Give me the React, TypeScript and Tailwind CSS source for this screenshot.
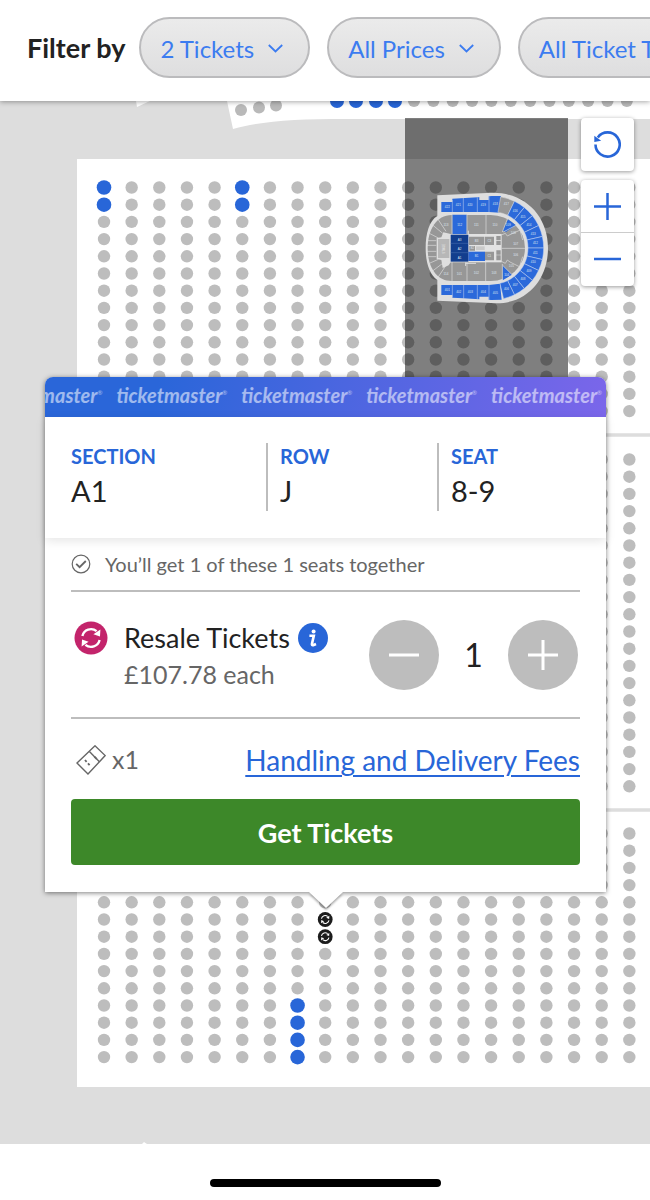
import { useState } from "react";

const COLS = Array.from({ length: 20 }, (_, i) => 104 + i * 27.65);

const BLOCKS = [
  { top: 187.5, rows: 14 },
  { top: 459.5, rows: 20 },
  { top: 833.5, rows: 14 },
];

const AVAILABLE = new Set(["0-0-0", "0-1-0", "0-0-5", "0-1-5", "2-10-7", "2-11-7", "2-12-7", "2-13-7"]);
const SELECTED = new Set(["2-5-8", "2-6-8"]);

const FILTERS = ["2 Tickets", "All Prices", "All Ticket Types"];

const ResaleArrows = () => (
  <g>
    <path d="M-8.6 -2 A8.8 8.8 0 0 1 5.6 -6.8" fill="none" stroke="white" strokeWidth="2.4" />
    <path d="M8.6 2 A8.8 8.8 0 0 1 -5.6 6.8" fill="none" stroke="white" strokeWidth="2.4" />
    <path d="M9.4 -8.6 L9 -1.4 L2.4 -3.8 Z" fill="white" />
    <path d="M-9.4 8.6 L-9 1.4 L-2.4 3.8 Z" fill="white" />
  </g>
);

const SeatMap = () => (
  <svg
    viewBox="0 101 650 1043"
    preserveAspectRatio="xMinYMin slice"
    className="block h-[1043px] w-full bg-[#dddddd]"
    aria-label="Seat map"
  >
    <path d="M136 101 L150 101 L137 107 Z" fill="white" />
    <path d="M227 101 L233 129 C262 121 295 119 345 119 L650 119 V101 Z" fill="white" />
    <g fill="#b9b9b9">
      <circle cx="241" cy="110" r="6" />
      <circle cx="259" cy="107.5" r="6" />
      <circle cx="276" cy="105.5" r="6" />
      {Array.from({ length: 12 }, (_, i) => (
        <circle key={i} cx={414 + i * 19.35} cy="101" r="6" />
      ))}
    </g>
    <g fill="#2866d8">
      {[337, 356, 376, 395].map((x) => (
        <circle key={x} cx={x} cy="101" r="7" />
      ))}
    </g>
    <rect x="77" y="159" width="573" height="928" fill="white" />
    <path d="M77 435 H650 M77 810 H650" stroke="#dddddd" strokeWidth="3.5" />
    <path d="M142 1144 L144 1142 L147 1144 Z" fill="white" />
    {BLOCKS.map((block, b) =>
      Array.from({ length: block.rows }, (_, r) =>
        COLS.map((x, c) => {
          const id = `${b}-${r}-${c}`;
          const y = block.top + r * 17.2;
          if (SELECTED.has(id)) {
            return (
              <g key={id} transform={`translate(${x} ${y})`}>
                <circle r="7.4" fill="#1c1c1c" />
                <g transform="scale(0.44)">
                  <ResaleArrows />
                </g>
              </g>
            );
          }
          const free = AVAILABLE.has(id);
          return <circle key={id} cx={x} cy={y} r={free ? 7.3 : 6.2} fill={free ? "#2866d8" : "#bdbdbd"} />;
        })
      )
    )}
  </svg>
);

const BLUE = "#2b69da";
const GRAY = "#979797";

const polar = (deg: number, r: number) => {
  const a = (deg * Math.PI) / 180;
  return `${(215 + Math.sin(a) * r).toFixed(1)} ${(204 - Math.cos(a) * r).toFixed(1)}`;
};

const wedge = (from: number, to: number) =>
  `M${polar(from, 156)} A156 156 0 0 1 ${polar(to, 156)} L${polar(to, 109)} A109 109 0 0 0 ${polar(from, 109)} Z`;

const upperRing = [416, 415, 414, 413, 412, 411, 410, 409, 408, 407, 406].map((name, i) => ({
  name,
  from: 26 + i * 12.8,
  to: 38.8 + i * 12.8,
}));

const MiniLabel = ({ x, y, children }: { x: number; y: number; children: React.ReactNode }) => (
  <text x={x} y={y + 3} textAnchor="middle" fontSize="9" fill="#dfe5f0">
    {children}
  </text>
);

const MiniMap = () => (
  <div className="absolute right-[82px] top-[17px] h-[262px] w-[163px] bg-black/50">
    <svg viewBox="-45 -186 489 786" className="block size-full font-['Liberation_Sans',sans-serif]" aria-label="Venue overview">
      <path d="M52 46 L200 39 C310 30 384 105 384 204 C384 300 318 378 214 369 L52 362 V300 C28 284 17 246 17 205 C17 160 28 122 52 108 Z" fill="#dedede" />
      {/* lower bowl */}
      <path d="M95 105 H212 A103 99 0 0 1 212 303 H95 C50 303 23 262 23 205 C23 148 50 105 95 105 Z" fill={GRAY} />
      <path d="M97 104 H140 V163 H97 Z M248 152 L264 118 L288 136 L258 156 Z M248 256 L276 284 L248 301 Z" fill={BLUE} />
      <g stroke="#dedede" strokeWidth="2" fill="none">
        <path d="M96 105 V164 M141 105 V164 M198 105 V164 M96 246 V304 M141 246 V304 M197 246 V304 M247 156 L264 112 M247 252 V303" />
        <path d="M245 205 H316 M250 156 L288 136 M270 164 L301 150 M270 246 L302 262 M248 256 L282 290" />
        <path d="M244 165 L256 160 L262 168 L270 164 M244 244 L256 250 L262 240 L270 246 M300 150 L308 180 M308 230 L298 262" />
        <path d="M23 182 H49 M21 196 H49 M21 214 H49 M23 230 H49 M28 160 L55 174 M39 136 L68 160 M54 118 L78 154 M28 250 L55 238 M39 272 L68 250 M54 292 L78 256" />
      </g>
      <path d="M50 174 L64 172 L70 157 L92 162 V247 L86 256 L68 264 L64 240 L50 237 Z" fill="#dedede" />
      <rect x="54" y="177" width="34" height="57" fill="#b7b7b7" />
      <rect x="90" y="162" width="155" height="85" fill="#e2e2e2" />
      <g fill={GRAY}>
        <path d="M147 170 H193 V195 H147 Z M195 170 H222 V195 H195 Z M148 198 H165 V212 H148 Z M195 215 H222 V241 H195 Z M229 168 H242 V181 H229 Z M229 183 H242 V195 H229 Z M229 211 H242 V224 H229 Z M229 226 H242 V241 H229 Z" />
      </g>
      <path d="M145 215 H195 V243 H145 Z" fill={BLUE} />
      <path d="M168 199 H194 V210 H168 Z" fill="#c9c9c9" />
      <path d="M92 164 H145 V245 H92 Z" fill="#123e8e" />
      <path d="M92 190 H145 M92 218 H145" stroke="#4c72b5" strokeWidth="1.5" />
      <path d="M137 247 V258 M137 250 H168 M145 164 V152" stroke="#dedede" strokeWidth="3" />
      {/* upper tier */}
      <path d="M64 66 L97 66 V56 L186 51 L215 48 L243 48 L240 98 L207 96 H64 Z" fill={BLUE} />
      <path d="M64 315 H207 L240 311 L245 359 L214 360 L130 355 L97 353 V345 H64 Z" fill={BLUE} />
      <path d="M178 46 H206 V60 H178 Z M178 350 H206 V363 H178 Z" fill="#dedede" />
      <path d={wedge(10, 26)} fill={GRAY} stroke="#dedede" strokeWidth="1.5" />
      {upperRing.map((s) => (
        <path key={s.name} d={wedge(s.from, s.to)} fill={BLUE} stroke="#c9d6f0" strokeWidth="1.5" />
      ))}
      <path
        d="M97 60 V96 M130 54 V97 M172 52 V97 M207 49 V97 M97 315 V352 M131 315 V356 M172 315 V357 M207 314 V360"
        stroke="#c9d6f0"
        strokeWidth="1.5"
      />
      {[422, 421, 420, 419, 418].map((n, i) => (
        <MiniLabel key={n} x={[82, 115, 150, 190, 226][i]} y={[81, 76, 75, 75, 72][i]}>{n}</MiniLabel>
      ))}
      {[401, 402, 403, 404, 405].map((n, i) => (
        <MiniLabel key={n} x={[82, 116, 151, 190, 226][i]} y={[331, 337, 337, 337, 340][i]}>{n}</MiniLabel>
      ))}
      <MiniLabel x={259} y={73}>417</MiniLabel>
      {upperRing.map((s) => {
        const [x, y] = polar((s.from + s.to) / 2, 132).split(" ").map(Number);
        return <MiniLabel key={s.name} x={x} y={y}>{s.name}</MiniLabel>;
      })}
      <MiniLabel x={78} y={135}>113</MiniLabel>
      <MiniLabel x={119} y={135}>112</MiniLabel>
      <MiniLabel x={169} y={136}>111</MiniLabel>
      <MiniLabel x={225} y={134}>110</MiniLabel>
      <MiniLabel x={265} y={134}>109</MiniLabel>
      <MiniLabel x={280} y={160}>108</MiniLabel>
      <MiniLabel x={287} y={193}>107</MiniLabel>
      <MiniLabel x={287} y={224}>106</MiniLabel>
      <MiniLabel x={274} y={257}>105</MiniLabel>
      <MiniLabel x={260} y={284}>104</MiniLabel>
      <MiniLabel x={222} y={278}>103</MiniLabel>
      <MiniLabel x={169} y={280}>102</MiniLabel>
      <MiniLabel x={118} y={281}>101</MiniLabel>
      <MiniLabel x={78} y={281}>114</MiniLabel>
      <MiniLabel x={119} y={179}>A3</MiniLabel>
      <MiniLabel x={119} y={206}>A2</MiniLabel>
      <MiniLabel x={119} y={233}>A1</MiniLabel>
      <MiniLabel x={170} y={183}>B3</MiniLabel>
      <MiniLabel x={208} y={183}>C3</MiniLabel>
      <MiniLabel x={157} y={205}>B2</MiniLabel>
      <MiniLabel x={170} y={229}>B1</MiniLabel>
      <MiniLabel x={208} y={229}>C1</MiniLabel>
      <text x="71" y="206" fontSize="9" fill="#e8e8e8" textAnchor="middle" transform="rotate(-90 71 206)" dy="3">
        STAGE
      </text>
    </svg>
  </div>
);

const MapControls = () => (
  <div className="absolute right-4 top-[17px] flex w-[53px] flex-col gap-[9px] text-[#2866d8]">
    <button type="button" aria-label="Reset map" className="flex h-[53px] items-center justify-center rounded bg-white shadow-[0_1px_4px_rgba(0,0,0,0.4)]">
      <svg width="27" height="27" viewBox="0 0 27 27" fill="none" stroke="currentColor" strokeWidth="2.6">
        <path d="M1.5 13.5 A12.1 12.1 0 1 0 3.8 6.4" />
        <path d="M0.3 4.7 V11 L7.2 9.8 Z" fill="currentColor" stroke="none" />
      </svg>
    </button>
    <div className="flex flex-col rounded bg-white shadow-[0_1px_4px_rgba(0,0,0,0.4)]">
      <button type="button" aria-label="Zoom in" className="flex h-[53px] items-center justify-center border-b border-[#cccccc]">
        <svg width="27" height="27" viewBox="0 0 27 27" stroke="currentColor" strokeWidth="2.5">
          <path d="M0 13.5 H27 M13.5 0 V27" />
        </svg>
      </button>
      <button type="button" aria-label="Zoom out" className="flex h-[53px] items-center justify-center">
        <svg width="27" height="27" viewBox="0 0 27 27" stroke="currentColor" strokeWidth="2.5">
          <path d="M0 13 H27" />
        </svg>
      </button>
    </div>
  </div>
);

const SeatField = ({ label, value }: { label: string; value: string }) => (
  <div className="h-[68px]">
    <dt className="text-xl leading-[26px] font-bold text-[#2866d8]">{label}</dt>
    <dd className="text-[29px] leading-[44px] text-[#222222]">{value}</dd>
  </div>
);

const TicketCard = () => {
  const [count, setCount] = useState(1);

  return (
    <section className="absolute left-[45px] right-11 top-[276px] rounded-t-lg bg-white shadow-[0_1px_5px_rgba(0,0,0,0.5)]">
      <div className="flex h-10 items-center justify-end gap-[14px] overflow-hidden rounded-t-lg bg-linear-[100deg] from-[#2a66d9] from-20% to-[#7b66ea] pr-1 pb-1 text-xl font-bold text-white/55 italic">
        {Array.from({ length: 5 }, (_, i) => (
          <span key={i} className="flex shrink-0">
            ticketmaster<sup className="top-0 text-[6px] leading-6 font-normal not-italic">®</sup>
          </span>
        ))}
      </div>

      <dl className="grid grid-cols-[195px_171px_1fr] px-[26px] pt-[26px] pb-[27px] shadow-[0_3px_10px_rgba(0,0,0,0.1)]">
        <SeatField label="SECTION" value="A1" />
        <div className="border-l-2 border-[#bdbdbd] pl-3">
          <SeatField label="ROW" value="J" />
        </div>
        <div className="border-l-2 border-[#bdbdbd] pl-3">
          <SeatField label="SEAT" value="8-9" />
        </div>
      </dl>

      <div className="px-[26px] pb-[27px]">
        <p className="flex h-[54px] items-center gap-[14px] border-b-2 border-[#bdbdbd] text-xl text-[#666666]">
          <svg width="20" height="20" viewBox="0 0 20 20" fill="none" stroke="currentColor">
            <circle cx="10" cy="10" r="8.8" strokeWidth="1.2" />
            <path d="M5.2 9.8 L8.6 13.2 L14.8 7" strokeWidth="1.8" />
          </svg>
          You’ll get 1 of these 1 seats together
        </p>

        <div className="flex h-[127px] items-center border-b-2 border-[#bdbdbd]">
          <svg width="34" height="34" viewBox="-17 -17 34 34" className="mt-[29px] ml-[3px] shrink-0 self-start" aria-hidden="true">
            <circle r="16.5" fill="#c3246b" />
            <ResaleArrows />
          </svg>
          <div className="ml-4 grow pt-[2px] leading-9 text-[#666666]">
            <div className="flex items-center gap-2 text-[27px] whitespace-nowrap text-[#222222]">
              Resale Tickets
              <button type="button" aria-label="About resale tickets">
                <svg width="30" height="30" viewBox="0 0 30 30" className="block">
                  <circle cx="15" cy="15" r="15" fill="#2866d8" />
                  <circle cx="15.6" cy="8.4" r="2" fill="white" />
                  <path d="M11.4 12.8 H15.8 L14 20.6 Q13.6 22.6 15.2 22.2 L18 21" fill="none" stroke="white" strokeWidth="2.6" />
                </svg>
              </button>
            </div>
            <div className="text-[25px] leading-9">£107.78 each</div>
          </div>
          <div className="mr-[2px] flex items-center text-white">
            <button
              type="button"
              aria-label="Fewer tickets"
              onClick={() => setCount(Math.max(1, count - 1))}
              className="flex size-[70px] items-center justify-center rounded-full bg-[#bdbdbd]"
            >
              <svg width="30" height="30" viewBox="0 0 30 30" stroke="currentColor" strokeWidth="3">
                <path d="M0 15 H30" />
              </svg>
            </button>
            <output className="w-[69px] text-center text-[32px] text-[#222222]">{count}</output>
            <button
              type="button"
              aria-label="More tickets"
              onClick={() => setCount(count + 1)}
              className="flex size-[70px] items-center justify-center rounded-full bg-[#bdbdbd]"
            >
              <svg width="30" height="30" viewBox="0 0 30 30" stroke="currentColor" strokeWidth="3">
                <path d="M0 15 H30 M15 0 V30" />
              </svg>
            </button>
          </div>
        </div>

        <div className="flex h-20 items-center justify-between pt-[2px] text-[25px] text-[#666666]">
          <span className="flex items-center gap-[6px] pl-[5px]">
            <svg width="30" height="30" viewBox="0 0 30 30" fill="none" stroke="currentColor" strokeWidth="1.4">
              <path d="M1 18 L19 0.8 L29.2 10.6 L12 29 Z" />
              <path d="M13.4 6.4 L23.4 16.8" />
              <path d="M9 15 L10.6 16.8 M12 18.4 L13.6 20.2" strokeWidth="1.8" />
              <path d="M18.4 11.6 L20.8 14.2" strokeWidth="1.8" />
            </svg>
            x{count}
          </span>
          <a href="#fees" className="text-[28px] text-[#2866d8] underline decoration-2 underline-offset-4">
            Handling and Delivery Fees
          </a>
        </div>

        <button type="button" className="h-[66px] w-full rounded bg-[#3d8829] pt-[2px] text-[27px] font-bold text-white">
          Get Tickets
        </button>
      </div>

      <svg width="34" height="17" viewBox="0 0 34 17" className="absolute top-full left-1/2 -translate-x-1/2 drop-shadow-[0_2px_1px_rgba(0,0,0,0.35)]">
        <path d="M0 0 H34 L17 16 Z" fill="white" />
      </svg>
    </section>
  );
};

const App = () => (
  <div className="overflow-hidden bg-white font-[Lato,sans-serif]">
    <header className="relative z-10 flex h-[101px] items-center gap-[17px] bg-white pb-[6px] pl-[27px] shadow-[0_1px_5px_rgba(0,0,0,0.35)]">
      <span className="mr-[-3px] shrink-0 pt-[2px] text-[27px] font-bold text-[#222222]">Filter by</span>
      {FILTERS.map((label) => (
        <button
          key={label}
          type="button"
          className="flex h-[61px] shrink-0 items-center gap-[14px] rounded-full border-2 border-[#bbbbbd] bg-linear-to-b from-[#ebebeb] to-[#dededf] pt-[2px] pr-[25px] pl-[19px] text-2xl text-[#3c7cf0]"
        >
          {label}
          <svg width="15" height="9" viewBox="0 0 15 9" fill="none" stroke="currentColor" strokeWidth="1.8">
            <path d="M0.8 1 L7.5 7.4 L14.2 1" />
          </svg>
        </button>
      ))}
    </header>

    <main className="relative">
      <SeatMap />
      <MiniMap />
      <MapControls />
      <TicketCard />
    </main>

    <footer className="flex h-14 items-center justify-center bg-white pt-[22px]">
      <div className="h-2 w-[231px] rounded-full bg-black" />
    </footer>
  </div>
);

export default App;
